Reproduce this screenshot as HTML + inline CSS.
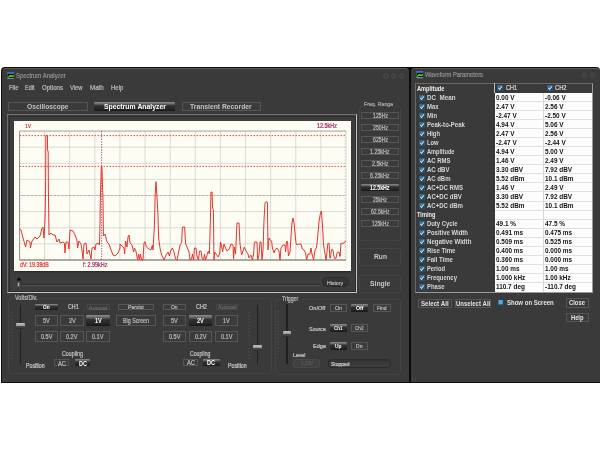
<!DOCTYPE html>
<html><head><meta charset="utf-8"><title>Spectrum Analyzer</title>
<style>
html,body{margin:0;padding:0;background:#fff;}
body{width:600px;height:450px;position:relative;overflow:hidden;font-family:"Liberation Sans",sans-serif;}
div,span,svg{position:absolute;box-sizing:border-box;}
.t{white-space:nowrap;transform-origin:0 50%;display:block;-webkit-text-stroke:0.22px currentColor;}
.t.bd{-webkit-text-stroke:0;font-weight:bold;}
.b{border:1px solid #565656;background:#3b3b3b;}
.b.on{border:0;background:linear-gradient(#8c8c8c 0%,#6e6e6e 18%,#303030 42%,#262626 80%,#161616 100%);border-radius:1px;}
.b.rd{border:1px solid #2c2c2c;border-radius:5px;background:linear-gradient(#383838,#2e2e2e);}
.b.ds{border-color:#474747;}
.p{border:1px solid #444;border-radius:3px;}
</style></head><body><div id="root" style="left:0;top:0;width:600px;height:450px;will-change:transform;filter:blur(0.35px);">

<div class="" style="left:1.00px;top:67.00px;width:599.00px;height:315.80px;background:#0c0c0c;border-radius:4px 4px 0 0;"></div>
<div class="" style="left:2.20px;top:67.60px;width:406.80px;height:314.10px;background:#3a3a3a;border-radius:4px 4px 0 0;border-top:1px solid #5a5a5a;"></div>
<div class="" style="left:411.00px;top:67.60px;width:189.00px;height:314.10px;background:#3a3a3a;border-radius:4px 4px 0 0;border-top:1px solid #5a5a5a;"></div>
<svg style="left:2.6px;top:376px" width="6" height="6" viewBox="0 0 6 6"><path d="M0.5 5.5h1M2.5 5.5h1M4.5 5.5h1M0.5 3.5h1M2.5 3.5h1M0.5 1.5h1" stroke="#4c4c4c" stroke-width="1"/></svg>
<svg style="left:411.6px;top:376px" width="6" height="6" viewBox="0 0 6 6"><path d="M0.5 5.5h1M2.5 5.5h1M4.5 5.5h1M0.5 3.5h1M2.5 3.5h1M0.5 1.5h1" stroke="#4c4c4c" stroke-width="1"/></svg>
<svg style="left:6.8px;top:71.5px" width="7.6" height="7.6" viewBox="0 0 15 15"><rect x="0" y="0.5" width="15" height="14" rx="1.5" fill="#5f6e8c"/><rect x="1" y="0.5" width="13.5" height="3.6" fill="#3f6fe0"/><rect x="1.2" y="3.6" width="13.3" height="8.6" fill="#081208"/><path d="M2 10.5C3.5 6.5 7 5 9.5 6.5C11 7.4 12.5 6.5 13.8 5V8.5C12 10.5 10 10.5 8.5 9.5C6.5 8.5 4.5 10 2.5 11.8Z" fill="#52d81e"/><rect x="1.2" y="12.2" width="13.3" height="2" fill="#8a8f98"/></svg>
<span class="t" style="left:16.00px;top:71.64px;font-size:6.60px;line-height:7.92px;color:#909090;transform:scaleX(0.894);">Spectrum&nbsp;Analyzer</span>
<div class="" style="left:383.40px;top:73.00px;width:5.60px;height:5.60px;border:1px solid #484848;border-radius:3px;background:#404040;"></div>
<div class="" style="left:390.90px;top:73.00px;width:5.60px;height:5.60px;border:1px solid #484848;border-radius:3px;background:#404040;"></div>
<div class="" style="left:398.50px;top:73.00px;width:5.60px;height:5.60px;border:1px solid #484848;border-radius:3px;background:#404040;"></div>
<span class="t" style="left:9.00px;top:84.24px;font-size:6.60px;line-height:7.92px;color:#bababa;transform:scaleX(0.893);">File</span>
<span class="t" style="left:25.00px;top:84.24px;font-size:6.60px;line-height:7.92px;color:#bababa;transform:scaleX(0.835);">Edit</span>
<span class="t" style="left:42.00px;top:84.24px;font-size:6.60px;line-height:7.92px;color:#bababa;transform:scaleX(0.923);">Options</span>
<span class="t" style="left:70.00px;top:84.24px;font-size:6.60px;line-height:7.92px;color:#bababa;transform:scaleX(0.881);">View</span>
<span class="t" style="left:90.00px;top:84.24px;font-size:6.60px;line-height:7.92px;color:#bababa;transform:scaleX(0.934);">Math</span>
<span class="t" style="left:110.70px;top:84.24px;font-size:6.60px;line-height:7.92px;color:#bababa;transform:scaleX(0.906);">Help</span>
<div class="b" style="left:8.40px;top:102.40px;width:79.60px;height:8.40px;"></div>
<span class="t bd" style="left:27.40px;top:102.49px;font-size:7.60px;line-height:9.12px;color:#c4c4c4;transform:scaleX(0.879);">Oscilloscope</span>
<div class="b on" style="left:94.30px;top:102.30px;width:80.70px;height:8.50px;"></div>
<span class="t bd" style="left:103.80px;top:102.44px;font-size:7.60px;line-height:9.12px;color:#fff;transform:scaleX(0.900);">Spectrum&nbsp;Analyzer</span>
<div class="b" style="left:181.70px;top:102.40px;width:79.00px;height:8.40px;"></div>
<span class="t bd" style="left:190.35px;top:102.49px;font-size:7.60px;line-height:9.12px;color:#c4c4c4;transform:scaleX(0.891);">Transient&nbsp;Recorder</span>
<div class="" style="left:7.20px;top:114.40px;width:350.30px;height:178.60px;border:1.4px solid #c4c4c4;border-top-color:#707070;border-left-color:#6e6e6e;background:#3d3d3d;"></div>
<div class="" style="left:8.60px;top:115.80px;width:347.50px;height:175.80px;border:1.6px solid #2c2c2c;border-right-width:1px;border-bottom-width:1px;"></div>
<div class="" style="left:13.60px;top:120.80px;width:337.50px;height:150.20px;background:#fdfdf3;box-shadow:0 1.5px 1.5px #2a2a2a;"></div>
<svg style="left:0;top:0" width="600" height="450" viewBox="0 0 600 450"><path d="M19.50 131.00V260.00M44.62 131.00V260.00M69.73 131.00V260.00M94.85 131.00V260.00M119.96 131.00V260.00M145.08 131.00V260.00M170.19 131.00V260.00M195.31 131.00V260.00M220.42 131.00V260.00M245.54 131.00V260.00M270.65 131.00V260.00M295.77 131.00V260.00M320.88 131.00V260.00M346.00 131.00V260.00M19.50 131.00H346.00M19.50 147.12H346.00M19.50 163.25H346.00M19.50 179.38H346.00M19.50 195.50H346.00M19.50 211.62H346.00M19.50 227.75H346.00M19.50 243.88H346.00M19.50 260.00H346.00" stroke="#d0d0c9" stroke-width="0.75" fill="none"/><path d="M19.50 131.00V260.00H346.00" stroke="#8e8e88" stroke-width="0.9" fill="none"/><path d="M19.50 131.00H346.00" stroke="#a8a8a2" stroke-width="0.8" fill="none"/><path d="M19.50 195.50H346.00" stroke="#adada7" stroke-width="0.9" stroke-dasharray="2.2 1.6" fill="none"/><path d="M19.50 131.00h1.6M19.50 134.22h1.6M19.50 137.45h1.6M19.50 140.68h1.6M19.50 143.90h1.6M19.50 147.12h1.6M19.50 150.35h1.6M19.50 153.57h1.6M19.50 156.80h1.6M19.50 160.03h1.6M19.50 163.25h1.6M19.50 166.47h1.6M19.50 169.70h1.6M19.50 172.93h1.6M19.50 176.15h1.6M19.50 179.38h1.6M19.50 182.60h1.6M19.50 185.82h1.6M19.50 189.05h1.6M19.50 192.28h1.6M19.50 195.50h1.6M19.50 198.72h1.6M19.50 201.95h1.6M19.50 205.18h1.6M19.50 208.40h1.6M19.50 211.62h1.6M19.50 214.85h1.6M19.50 218.07h1.6M19.50 221.30h1.6M19.50 224.53h1.6M19.50 227.75h1.6M19.50 230.97h1.6M19.50 234.20h1.6M19.50 237.43h1.6M19.50 240.65h1.6M19.50 243.88h1.6M19.50 247.10h1.6M19.50 250.32h1.6M19.50 253.55h1.6M19.50 256.77h1.6M19.50 260.00h1.6M346.00 131.00h-1.6M346.00 134.22h-1.6M346.00 137.45h-1.6M346.00 140.68h-1.6M346.00 143.90h-1.6M346.00 147.12h-1.6M346.00 150.35h-1.6M346.00 153.57h-1.6M346.00 156.80h-1.6M346.00 160.03h-1.6M346.00 163.25h-1.6M346.00 166.47h-1.6M346.00 169.70h-1.6M346.00 172.93h-1.6M346.00 176.15h-1.6M346.00 179.38h-1.6M346.00 182.60h-1.6M346.00 185.82h-1.6M346.00 189.05h-1.6M346.00 192.28h-1.6M346.00 195.50h-1.6M346.00 198.72h-1.6M346.00 201.95h-1.6M346.00 205.18h-1.6M346.00 208.40h-1.6M346.00 211.62h-1.6M346.00 214.85h-1.6M346.00 218.07h-1.6M346.00 221.30h-1.6M346.00 224.53h-1.6M346.00 227.75h-1.6M346.00 230.97h-1.6M346.00 234.20h-1.6M346.00 237.43h-1.6M346.00 240.65h-1.6M346.00 243.88h-1.6M346.00 247.10h-1.6M346.00 250.32h-1.6M346.00 253.55h-1.6M346.00 256.77h-1.6M346.00 260.00h-1.6M19.50 131.00v1.4M19.50 260.00v-1.4M24.52 131.00v1.4M24.52 260.00v-1.4M29.55 131.00v1.4M29.55 260.00v-1.4M34.57 131.00v1.4M34.57 260.00v-1.4M39.59 131.00v1.4M39.59 260.00v-1.4M44.62 131.00v1.4M44.62 260.00v-1.4M49.64 131.00v1.4M49.64 260.00v-1.4M54.66 131.00v1.4M54.66 260.00v-1.4M59.68 131.00v1.4M59.68 260.00v-1.4M64.71 131.00v1.4M64.71 260.00v-1.4M69.73 131.00v1.4M69.73 260.00v-1.4M74.75 131.00v1.4M74.75 260.00v-1.4M79.78 131.00v1.4M79.78 260.00v-1.4M84.80 131.00v1.4M84.80 260.00v-1.4M89.82 131.00v1.4M89.82 260.00v-1.4M94.85 131.00v1.4M94.85 260.00v-1.4M99.87 131.00v1.4M99.87 260.00v-1.4M104.89 131.00v1.4M104.89 260.00v-1.4M109.92 131.00v1.4M109.92 260.00v-1.4M114.94 131.00v1.4M114.94 260.00v-1.4M119.96 131.00v1.4M119.96 260.00v-1.4M124.98 131.00v1.4M124.98 260.00v-1.4M130.01 131.00v1.4M130.01 260.00v-1.4M135.03 131.00v1.4M135.03 260.00v-1.4M140.05 131.00v1.4M140.05 260.00v-1.4M145.08 131.00v1.4M145.08 260.00v-1.4M150.10 131.00v1.4M150.10 260.00v-1.4M155.12 131.00v1.4M155.12 260.00v-1.4M160.15 131.00v1.4M160.15 260.00v-1.4M165.17 131.00v1.4M165.17 260.00v-1.4M170.19 131.00v1.4M170.19 260.00v-1.4M175.22 131.00v1.4M175.22 260.00v-1.4M180.24 131.00v1.4M180.24 260.00v-1.4M185.26 131.00v1.4M185.26 260.00v-1.4M190.28 131.00v1.4M190.28 260.00v-1.4M195.31 131.00v1.4M195.31 260.00v-1.4M200.33 131.00v1.4M200.33 260.00v-1.4M205.35 131.00v1.4M205.35 260.00v-1.4M210.38 131.00v1.4M210.38 260.00v-1.4M215.40 131.00v1.4M215.40 260.00v-1.4M220.42 131.00v1.4M220.42 260.00v-1.4M225.45 131.00v1.4M225.45 260.00v-1.4M230.47 131.00v1.4M230.47 260.00v-1.4M235.49 131.00v1.4M235.49 260.00v-1.4M240.52 131.00v1.4M240.52 260.00v-1.4M245.54 131.00v1.4M245.54 260.00v-1.4M250.56 131.00v1.4M250.56 260.00v-1.4M255.58 131.00v1.4M255.58 260.00v-1.4M260.61 131.00v1.4M260.61 260.00v-1.4M265.63 131.00v1.4M265.63 260.00v-1.4M270.65 131.00v1.4M270.65 260.00v-1.4M275.68 131.00v1.4M275.68 260.00v-1.4M280.70 131.00v1.4M280.70 260.00v-1.4M285.72 131.00v1.4M285.72 260.00v-1.4M290.75 131.00v1.4M290.75 260.00v-1.4M295.77 131.00v1.4M295.77 260.00v-1.4M300.79 131.00v1.4M300.79 260.00v-1.4M305.82 131.00v1.4M305.82 260.00v-1.4M310.84 131.00v1.4M310.84 260.00v-1.4M315.86 131.00v1.4M315.86 260.00v-1.4M320.88 131.00v1.4M320.88 260.00v-1.4M325.91 131.00v1.4M325.91 260.00v-1.4M330.93 131.00v1.4M330.93 260.00v-1.4M335.95 131.00v1.4M335.95 260.00v-1.4M340.98 131.00v1.4M340.98 260.00v-1.4M346.00 131.00v1.4M346.00 260.00v-1.4" stroke="#b0b0aa" stroke-width="0.5" fill="none"/><path d="M19.50 260.00H346.00" stroke="#8e8e88" stroke-width="0.9" fill="none"/><path d="M19.50 135.6H346.00M19.50 166.4H346.00" stroke="#e83a3a" stroke-width="0.9" stroke-dasharray="1.6 1.4" fill="none"/><path d="M101.6 131.00V260.00" stroke="#a03068" stroke-width="0.9" stroke-dasharray="1.2 1.4" fill="none"/><path d="M19.5 229.0 L21.0 230.0 L23.0 238.0 L25.6 247.0 L27.0 240.0 L30.0 242.0 L30.4 248.0 L32.0 241.0 L35.0 237.0 L37.0 239.0 L40.0 236.0 L42.0 228.0 L43.0 227.0 L44.0 238.0 L45.0 220.0 L45.6 190.0 L45.9 135.6 L47.4 135.6 L47.6 150.0 L48.2 152.0 L48.4 190.0 L49.0 235.0 L51.0 233.0 L53.0 235.0 L55.0 235.0 L57.0 242.0 L59.0 239.0 L60.0 243.0 L63.0 242.0 L64.4 243.0 L65.0 253.0 L66.0 242.0 L68.0 242.0 L69.0 249.0 L70.0 230.0 L73.0 231.0 L75.0 235.0 L77.0 240.0 L77.6 248.0 L79.0 241.0 L81.0 244.0 L82.0 250.0 L83.0 259.0 L84.0 244.0 L86.0 243.0 L87.0 254.0 L89.0 250.0 L91.0 259.0 L92.0 248.0 L94.0 247.0 L95.0 250.0 L96.0 244.0 L98.0 243.0 L99.4 245.0 L99.9 230.0 L100.3 200.0 L101.3 166.6 L101.9 166.6 L103.0 200.0 L103.4 236.0 L105.0 234.0 L107.0 242.0 L109.0 244.0 L111.0 250.0 L113.0 255.0 L115.0 256.0 L118.0 253.0 L120.0 248.0 L120.0 244.0 L122.0 246.0 L124.0 248.0 L124.6 254.0 L125.6 241.0 L127.0 247.0 L128.0 237.0 L129.0 235.0 L130.0 243.0 L132.0 245.0 L133.6 252.0 L134.4 248.0 L135.6 250.0 L136.6 254.0 L137.6 260.0 L138.6 254.0 L139.6 260.0 L140.4 254.0 L141.6 260.0 L143.0 260.0 L144.0 243.0 L145.0 241.6 L146.4 247.0 L149.0 249.0 L151.0 250.0 L152.4 245.0 L153.0 250.0 L154.4 226.0 L155.2 195.0 L156.0 181.6 L156.9 195.0 L158.0 216.0 L158.6 238.0 L160.0 248.0 L161.6 255.0 L164.0 260.0 L166.0 255.0 L168.0 252.0 L169.4 256.0 L170.6 251.0 L172.4 248.0 L174.0 252.0 L175.6 259.0 L177.0 260.0 L179.0 250.0 L180.4 244.0 L181.6 243.0 L182.4 227.0 L184.6 227.0 L185.6 244.0 L187.0 247.0 L189.0 252.0 L190.0 260.0 L191.6 259.0 L192.4 254.0 L193.6 260.0 L194.4 248.0 L196.0 248.0 L197.0 256.0 L198.4 260.0 L199.6 251.0 L201.0 251.0 L202.0 258.0 L203.6 260.0 L204.4 254.0 L205.6 260.0 L207.0 255.0 L208.4 251.0 L209.4 254.0 L210.4 220.0 L211.0 192.0 L212.0 192.0 L212.6 208.0 L213.4 210.0 L214.0 260.0 L214.6 252.0 L216.0 254.0 L218.0 257.0 L219.6 254.0 L220.6 242.0 L221.6 246.0 L222.6 252.0 L224.0 244.0 L225.6 248.0 L227.0 251.0 L228.4 250.0 L229.6 248.0 L231.0 244.0 L233.0 245.0 L233.6 259.0 L234.4 247.0 L235.6 254.0 L237.0 223.0 L239.0 223.0 L240.0 244.0 L241.6 255.0 L243.0 251.0 L244.4 247.0 L246.0 251.0 L248.0 254.0 L249.0 258.0 L251.0 255.0 L252.4 260.0 L253.6 254.0 L254.4 242.0 L257.0 242.0 L257.6 260.0 L259.0 255.0 L260.0 242.0 L261.0 242.0 L262.0 260.0 L263.0 250.0 L264.0 220.0 L265.0 203.0 L266.0 201.6 L267.4 202.4 L268.0 250.0 L269.0 238.0 L270.0 240.0 L271.6 241.0 L272.4 248.0 L274.0 253.0 L275.6 249.0 L277.0 248.0 L279.0 251.0 L280.0 260.0 L281.0 248.0 L283.0 245.0 L285.0 245.0 L285.6 252.0 L286.6 241.0 L287.6 242.0 L288.4 256.0 L290.0 252.0 L291.0 236.0 L292.0 223.0 L293.0 218.0 L294.0 223.0 L295.0 233.0 L296.0 243.0 L297.0 245.0 L299.0 244.0 L301.0 244.0 L302.4 249.0 L304.0 250.0 L305.6 253.0 L306.6 260.0 L308.0 254.0 L310.0 254.0 L311.0 248.0 L312.0 254.0 L313.6 260.0 L315.0 250.0 L316.4 248.0 L317.6 238.0 L319.0 222.0 L320.4 213.0 L321.4 211.0 L322.4 224.0 L323.6 245.0 L325.0 254.0 L326.1 260.0 L327.2 250.0 L327.8 243.5 L329.1 243.5 L329.8 258.0 L330.6 258.0 L331.3 250.0 L332.8 249.5 L333.9 256.0 L334.7 258.5 L336.1 258.0 L337.2 252.5 L339.1 252.0 L339.8 256.5 L340.2 256.0 L340.9 243.5 L343.9 243.0 L345.0 241.5 L346.0 241.5" stroke="#e5352f" stroke-width="1" fill="none" stroke-linejoin="round"/></svg>
<span class="t bd" style="left:24.90px;top:122.50px;font-size:6.00px;line-height:7.20px;color:#e03030;transform:scaleX(0.818);">1V</span>
<span class="t" style="left:317.00px;top:122.16px;font-size:6.40px;line-height:7.68px;color:#a02868;transform:scaleX(0.852);">12.5kHz</span>
<span class="t" style="left:20.20px;top:261.36px;font-size:6.40px;line-height:7.68px;color:#e03030;transform:scaleX(0.823);">dV:&nbsp;19.38dB</span>
<span class="t" style="left:82.60px;top:261.36px;font-size:6.40px;line-height:7.68px;color:#a02868;transform:scaleX(0.847);">f:&nbsp;2.99kHz</span>
<div class="" style="left:22.00px;top:284.00px;width:298.20px;height:1.60px;background:linear-gradient(#2a2a2a 50%,#545454 50%);"></div>
<div class="" style="left:16.60px;top:282.00px;width:3.40px;height:5.00px;background:#b8b8b8;border-radius:1px;border:0.5px solid #555;"></div>
<svg style="left:15.5px;top:277px" width="6" height="4" viewBox="0 0 6 4"><path d="M3 0L5.6 3.6H0.4Z" fill="#0a0a0a"/></svg>
<div class="b rd" style="left:321.80px;top:277.20px;width:27.00px;height:9.80px;"></div>
<span class="t" style="left:327.30px;top:278.83px;font-size:6.20px;line-height:7.44px;color:#bcbcbc;transform:scaleX(0.829);">History</span>
<div class="p" style="left:359.40px;top:106.00px;width:41.60px;height:135.40px;"></div>
<div class="" style="left:362.00px;top:101.00px;width:32.00px;height:7.00px;background:#3a3a3a;"></div>
<span class="t" style="left:364.00px;top:99.64px;font-size:6.10px;line-height:7.32px;color:#ababab;transform:scaleX(0.861);">Freq.&nbsp;Range</span>
<div class="b" style="left:361.40px;top:112.20px;width:37.60px;height:6.70px;"></div>
<span class="t" style="left:372.70px;top:112.16px;font-size:6.40px;line-height:7.68px;color:#bcbcbc;transform:scaleX(0.811);">125Hz</span>
<div class="b" style="left:361.40px;top:124.23px;width:37.60px;height:6.70px;"></div>
<span class="t" style="left:372.70px;top:124.19px;font-size:6.40px;line-height:7.68px;color:#bcbcbc;transform:scaleX(0.811);">250Hz</span>
<div class="b" style="left:361.40px;top:136.26px;width:37.60px;height:6.70px;"></div>
<span class="t" style="left:372.70px;top:136.22px;font-size:6.40px;line-height:7.68px;color:#bcbcbc;transform:scaleX(0.811);">625Hz</span>
<div class="b" style="left:361.40px;top:148.29px;width:37.60px;height:6.70px;"></div>
<span class="t" style="left:370.45px;top:148.25px;font-size:6.40px;line-height:7.68px;color:#bcbcbc;transform:scaleX(0.831);">1.25kHz</span>
<div class="b" style="left:361.40px;top:160.32px;width:37.60px;height:6.70px;"></div>
<span class="t" style="left:371.95px;top:160.28px;font-size:6.40px;line-height:7.68px;color:#bcbcbc;transform:scaleX(0.828);">2.5kHz</span>
<div class="b" style="left:361.40px;top:172.35px;width:37.60px;height:6.70px;"></div>
<span class="t" style="left:370.45px;top:172.31px;font-size:6.40px;line-height:7.68px;color:#bcbcbc;transform:scaleX(0.831);">6.25kHz</span>
<div class="b on" style="left:361.40px;top:184.38px;width:37.60px;height:6.70px;"></div>
<span class="t bd" style="left:370.45px;top:184.34px;font-size:6.40px;line-height:7.68px;color:#fff;transform:scaleX(0.818);">12.5kHz</span>
<div class="b" style="left:361.40px;top:196.41px;width:37.60px;height:6.70px;"></div>
<span class="t" style="left:373.20px;top:196.37px;font-size:6.40px;line-height:7.68px;color:#bcbcbc;transform:scaleX(0.772);">25kHz</span>
<div class="b" style="left:361.40px;top:208.44px;width:37.60px;height:6.70px;"></div>
<span class="t" style="left:370.95px;top:208.40px;font-size:6.40px;line-height:7.68px;color:#bcbcbc;transform:scaleX(0.788);">62.5kHz</span>
<div class="b" style="left:361.40px;top:220.47px;width:37.60px;height:6.70px;"></div>
<span class="t" style="left:371.70px;top:220.43px;font-size:6.40px;line-height:7.68px;color:#bcbcbc;transform:scaleX(0.783);">125kHz</span>
<div class="p" style="left:359.40px;top:248.40px;width:41.60px;height:17.80px;"></div>
<span class="t bd" style="left:373.80px;top:252.32px;font-size:7.80px;line-height:9.36px;color:#c8c8c8;transform:scaleX(0.857);">Run</span>
<div class="p" style="left:359.40px;top:275.00px;width:41.60px;height:17.60px;"></div>
<span class="t bd" style="left:369.90px;top:278.92px;font-size:7.80px;line-height:9.36px;color:#c8c8c8;transform:scaleX(0.872);">Single</span>
<div class="p" style="left:7.60px;top:298.40px;width:264.60px;height:76.00px;"></div>
<div class="" style="left:13.50px;top:295.00px;width:24.50px;height:7.00px;background:#3a3a3a;"></div>
<span class="t" style="left:14.50px;top:294.30px;font-size:6.50px;line-height:7.80px;color:#bdbdbd;transform:scaleX(0.842);">Volts/Div.</span>
<div class="" style="left:19.90px;top:305.00px;width:1.60px;height:59.40px;background:#202020;"></div>
<svg style="left:11.00px;top:311.50px" width="3" height="47.40"><path d="M0 0.50h2.2M0 3.81h2.2M0 7.13h2.2M0 10.44h2.2M0 13.76h2.2M0 17.07h2.2M0 20.39h2.2M0 23.70h2.2M0 27.01h2.2M0 30.33h2.2M0 33.64h2.2M0 36.96h2.2M0 40.27h2.2M0 43.59h2.2M0 46.90h2.2" stroke="#4b4b4b" stroke-width="0.9"/></svg>
<div class="" style="left:16.20px;top:322.70px;width:8.80px;height:6.00px;background:linear-gradient(#c4c4c4 0%,#a0a0a0 40%,#4a4a4a 58%,#2a2a2a 100%);border-radius:1.2px;"></div>
<div class="" style="left:256.90px;top:305.00px;width:1.60px;height:59.00px;background:#202020;"></div>
<svg style="left:248.00px;top:311.50px" width="3" height="47.00"><path d="M0 0.50h2.2M0 3.79h2.2M0 7.07h2.2M0 10.36h2.2M0 13.64h2.2M0 16.93h2.2M0 20.21h2.2M0 23.50h2.2M0 26.79h2.2M0 30.07h2.2M0 33.36h2.2M0 36.64h2.2M0 39.93h2.2M0 43.21h2.2M0 46.50h2.2" stroke="#4b4b4b" stroke-width="0.9"/></svg>
<div class="" style="left:253.20px;top:345.40px;width:8.80px;height:5.80px;background:linear-gradient(#c4c4c4 0%,#a0a0a0 40%,#4a4a4a 58%,#2a2a2a 100%);border-radius:1.2px;"></div>
<div class="b on" style="left:34.50px;top:303.60px;width:23.50px;height:6.80px;"></div>
<span class="t bd" style="left:42.95px;top:303.85px;font-size:6.00px;line-height:7.20px;color:#fff;transform:scaleX(0.792);">On</span>
<span class="t" style="left:67.60px;top:303.06px;font-size:6.40px;line-height:7.68px;color:#c8c8c8;transform:scaleX(0.828);">CH1</span>
<div class="b ds" style="left:87.00px;top:303.60px;width:22.80px;height:6.60px;"></div>
<span class="t" style="left:89.15px;top:303.63px;font-size:6.20px;line-height:7.44px;color:#6a6a6a;transform:scaleX(0.880);">Autoset</span>
<div class="b" style="left:117.80px;top:303.60px;width:36.00px;height:6.20px;"></div>
<span class="t" style="left:127.90px;top:303.43px;font-size:6.20px;line-height:7.44px;color:#bcbcbc;transform:scaleX(0.834);">Persist</span>
<div class="b" style="left:116.00px;top:315.20px;width:39.80px;height:10.40px;"></div>
<span class="t" style="left:122.90px;top:316.95px;font-size:6.50px;line-height:7.80px;color:#bcbcbc;transform:scaleX(0.818);">Big&nbsp;Screen</span>
<div class="b" style="left:34.50px;top:315.20px;width:23.40px;height:10.40px;"></div>
<span class="t" style="left:42.80px;top:316.89px;font-size:6.60px;line-height:7.92px;color:#bcbcbc;transform:scaleX(0.842);">5V</span>
<div class="b" style="left:60.40px;top:315.20px;width:23.40px;height:10.40px;"></div>
<span class="t" style="left:68.70px;top:316.89px;font-size:6.60px;line-height:7.92px;color:#bcbcbc;transform:scaleX(0.842);">2V</span>
<div class="b on" style="left:86.30px;top:315.20px;width:23.40px;height:10.40px;"></div>
<span class="t bd" style="left:94.60px;top:316.89px;font-size:6.60px;line-height:7.92px;color:#fff;transform:scaleX(0.842);">1V</span>
<div class="b" style="left:34.50px;top:331.40px;width:23.40px;height:10.40px;"></div>
<span class="t" style="left:40.50px;top:333.09px;font-size:6.60px;line-height:7.92px;color:#bcbcbc;transform:scaleX(0.840);">0.5V</span>
<div class="b" style="left:60.40px;top:331.40px;width:23.40px;height:10.40px;"></div>
<span class="t" style="left:66.40px;top:333.09px;font-size:6.60px;line-height:7.92px;color:#bcbcbc;transform:scaleX(0.840);">0.2V</span>
<div class="b" style="left:86.30px;top:331.40px;width:23.40px;height:10.40px;"></div>
<span class="t" style="left:92.30px;top:333.09px;font-size:6.60px;line-height:7.92px;color:#bcbcbc;transform:scaleX(0.840);">0.1V</span>
<span class="t" style="left:61.80px;top:349.94px;font-size:6.60px;line-height:7.92px;color:#c0c0c0;transform:scaleX(0.806);">Coupling</span>
<span class="t" style="left:25.70px;top:361.96px;font-size:6.40px;line-height:7.68px;color:#c8c8c8;transform:scaleX(0.817);">Position</span>
<div class="b" style="left:54.10px;top:359.30px;width:15.40px;height:7.20px;"></div>
<span class="t" style="left:57.80px;top:359.51px;font-size:6.40px;line-height:7.68px;color:#bcbcbc;transform:scaleX(0.900);">AC</span>
<div class="b on" style="left:74.70px;top:359.30px;width:15.80px;height:7.20px;"></div>
<span class="t bd" style="left:78.60px;top:359.51px;font-size:6.40px;line-height:7.68px;color:#fff;transform:scaleX(0.865);">DC</span>
<div class="b" style="left:163.00px;top:303.60px;width:22.80px;height:6.20px;"></div>
<span class="t" style="left:171.10px;top:303.67px;font-size:5.80px;line-height:6.96px;color:#bcbcbc;transform:scaleX(0.853);">On</span>
<span class="t" style="left:196.20px;top:303.06px;font-size:6.40px;line-height:7.68px;color:#c8c8c8;transform:scaleX(0.844);">CH2</span>
<div class="b ds" style="left:216.20px;top:303.60px;width:21.80px;height:6.20px;"></div>
<span class="t" style="left:217.85px;top:303.43px;font-size:6.20px;line-height:7.44px;color:#6a6a6a;transform:scaleX(0.880);">Autoset</span>
<div class="b" style="left:163.00px;top:315.20px;width:22.80px;height:10.40px;"></div>
<span class="t" style="left:171.00px;top:316.89px;font-size:6.60px;line-height:7.92px;color:#bcbcbc;transform:scaleX(0.842);">5V</span>
<div class="b on" style="left:189.10px;top:315.20px;width:22.80px;height:10.40px;"></div>
<span class="t bd" style="left:197.10px;top:316.89px;font-size:6.60px;line-height:7.92px;color:#fff;transform:scaleX(0.842);">2V</span>
<div class="b" style="left:215.20px;top:315.20px;width:22.80px;height:10.40px;"></div>
<span class="t" style="left:223.20px;top:316.89px;font-size:6.60px;line-height:7.92px;color:#bcbcbc;transform:scaleX(0.842);">1V</span>
<div class="b" style="left:163.00px;top:331.40px;width:22.80px;height:10.40px;"></div>
<span class="t" style="left:168.70px;top:333.09px;font-size:6.60px;line-height:7.92px;color:#bcbcbc;transform:scaleX(0.840);">0.5V</span>
<div class="b" style="left:189.10px;top:331.40px;width:22.80px;height:10.40px;"></div>
<span class="t" style="left:194.80px;top:333.09px;font-size:6.60px;line-height:7.92px;color:#bcbcbc;transform:scaleX(0.840);">0.2V</span>
<div class="b" style="left:215.20px;top:331.40px;width:22.80px;height:10.40px;"></div>
<span class="t" style="left:220.90px;top:333.09px;font-size:6.60px;line-height:7.92px;color:#bcbcbc;transform:scaleX(0.840);">0.1V</span>
<span class="t" style="left:190.40px;top:349.94px;font-size:6.60px;line-height:7.92px;color:#c0c0c0;transform:scaleX(0.783);">Coupling</span>
<div class="b" style="left:183.00px;top:359.30px;width:15.00px;height:7.00px;"></div>
<span class="t" style="left:186.50px;top:359.41px;font-size:6.40px;line-height:7.68px;color:#bcbcbc;transform:scaleX(0.900);">AC</span>
<div class="b on" style="left:202.50px;top:359.30px;width:17.00px;height:7.00px;"></div>
<span class="t bd" style="left:207.00px;top:359.41px;font-size:6.40px;line-height:7.68px;color:#fff;transform:scaleX(0.865);">DC</span>
<span class="t" style="left:227.50px;top:361.96px;font-size:6.40px;line-height:7.68px;color:#c8c8c8;transform:scaleX(0.821);">Position</span>
<div class="p" style="left:275.00px;top:298.60px;width:125.60px;height:76.80px;"></div>
<div class="" style="left:280.50px;top:295.00px;width:19.00px;height:7.00px;background:#3a3a3a;"></div>
<span class="t" style="left:281.80px;top:294.50px;font-size:6.50px;line-height:7.80px;color:#bdbdbd;transform:scaleX(0.796);">Trigger</span>
<div class="" style="left:286.20px;top:304.40px;width:1.60px;height:59.40px;background:#202020;"></div>
<svg style="left:277.30px;top:310.90px" width="3" height="47.40"><path d="M0 0.50h2.2M0 3.81h2.2M0 7.13h2.2M0 10.44h2.2M0 13.76h2.2M0 17.07h2.2M0 20.39h2.2M0 23.70h2.2M0 27.01h2.2M0 30.33h2.2M0 33.64h2.2M0 36.96h2.2M0 40.27h2.2M0 43.59h2.2M0 46.90h2.2" stroke="#4b4b4b" stroke-width="0.9"/></svg>
<div class="" style="left:282.50px;top:331.00px;width:8.80px;height:6.00px;background:linear-gradient(#c4c4c4 0%,#a0a0a0 40%,#4a4a4a 58%,#2a2a2a 100%);border-radius:1.2px;"></div>
<span class="t" style="left:308.60px;top:304.08px;font-size:6.20px;line-height:7.44px;color:#c8c8c8;transform:scaleX(0.904);">On/Off</span>
<div class="b" style="left:329.50px;top:304.00px;width:17.10px;height:7.80px;"></div>
<span class="t" style="left:334.55px;top:304.75px;font-size:6.00px;line-height:7.20px;color:#bcbcbc;transform:scaleX(0.875);">On</span>
<div class="b on" style="left:351.20px;top:304.00px;width:17.00px;height:7.80px;"></div>
<span class="t bd" style="left:355.95px;top:304.75px;font-size:6.00px;line-height:7.20px;color:#fff;transform:scaleX(0.866);">Off</span>
<div class="b" style="left:373.10px;top:304.00px;width:17.80px;height:7.80px;"></div>
<span class="t" style="left:377.25px;top:304.75px;font-size:6.00px;line-height:7.20px;color:#bcbcbc;transform:scaleX(0.814);">Find</span>
<span class="t" style="left:308.60px;top:324.68px;font-size:6.20px;line-height:7.44px;color:#c8c8c8;transform:scaleX(0.865);">Source</span>
<div class="b on" style="left:329.50px;top:324.20px;width:17.10px;height:8.20px;"></div>
<span class="t bd" style="left:333.80px;top:325.15px;font-size:6.00px;line-height:7.20px;color:#fff;transform:scaleX(0.750);">Ch1</span>
<div class="b" style="left:351.20px;top:324.20px;width:17.00px;height:8.20px;"></div>
<span class="t" style="left:355.45px;top:325.15px;font-size:6.00px;line-height:7.20px;color:#bcbcbc;transform:scaleX(0.772);">Ch2</span>
<span class="t" style="left:312.60px;top:342.28px;font-size:6.20px;line-height:7.44px;color:#c8c8c8;transform:scaleX(0.898);">Edge</span>
<div class="b on" style="left:329.50px;top:342.20px;width:17.10px;height:8.20px;"></div>
<span class="t bd" style="left:334.80px;top:343.15px;font-size:6.00px;line-height:7.20px;color:#fff;transform:scaleX(0.813);">Up</span>
<div class="b" style="left:351.20px;top:342.20px;width:17.00px;height:8.20px;"></div>
<span class="t" style="left:356.45px;top:343.15px;font-size:6.00px;line-height:7.20px;color:#bcbcbc;transform:scaleX(0.847);">Dn</span>
<span class="t" style="left:292.60px;top:350.78px;font-size:6.20px;line-height:7.44px;color:#c8c8c8;transform:scaleX(0.837);">Level</span>
<div class="" style="left:293.30px;top:359.20px;width:26.90px;height:9.20px;border:1px solid #4a4a4a;border-radius:3px;background:#404040;"></div>
<span class="t" style="left:300.80px;top:360.40px;font-size:6.00px;line-height:7.20px;color:#5e5e5e;transform:scaleX(0.765);">1.13V</span>
<div class="" style="left:328.30px;top:359.20px;width:63.00px;height:9.20px;border:1px solid #2c2c2c;border-radius:3px;background:linear-gradient(#343434,#3e3e3e);"></div>
<span class="t" style="left:331.00px;top:360.28px;font-size:6.20px;line-height:7.44px;color:#d0d0d0;transform:scaleX(0.801);">Stopped</span>
<svg style="left:415.6px;top:71.4px" width="7.6" height="7.6" viewBox="0 0 15 15"><rect x="0" y="0.5" width="15" height="14" rx="1.5" fill="#5f6e8c"/><rect x="1" y="0.5" width="13.5" height="3.6" fill="#3f6fe0"/><rect x="1.2" y="3.6" width="13.3" height="8.6" fill="#081208"/><path d="M2 10.5C3.5 6.5 7 5 9.5 6.5C11 7.4 12.5 6.5 13.8 5V8.5C12 10.5 10 10.5 8.5 9.5C6.5 8.5 4.5 10 2.5 11.8Z" fill="#52d81e"/><rect x="1.2" y="12.2" width="13.3" height="2" fill="#8a8f98"/></svg>
<span class="t" style="left:425.20px;top:71.44px;font-size:6.60px;line-height:7.92px;color:#909090;transform:scaleX(0.883);">Waveform&nbsp;Parameters</span>
<div class="" style="left:581.60px;top:72.40px;width:5.60px;height:5.60px;border:1px solid #484848;border-radius:3px;background:#404040;"></div>
<div class="" style="left:589.60px;top:72.40px;width:5.60px;height:5.60px;border:1px solid #484848;border-radius:3px;background:#404040;"></div>
<div class="" style="left:414.50px;top:82.60px;width:178.10px;height:210.15px;border:1px solid #9a9a9a;border-top-color:#6a6a6a;border-left-color:#6a6a6a;background:#3a3a3a;"></div>
<div class="" style="left:495.20px;top:92.60px;width:96.60px;height:198.95px;background:#fdfdfd;"></div>
<div class="" style="left:494.40px;top:83.40px;width:0.80px;height:9.20px;background:#bdbdbd;"></div>
<div class="" style="left:543.20px;top:92.60px;width:0.80px;height:198.95px;background:#d4d4d4;"></div>
<div class="" style="left:495.20px;top:101.22px;width:96.60px;height:0.75px;background:#e0e0e0;"></div>
<div class="" style="left:495.20px;top:110.25px;width:96.60px;height:0.75px;background:#e0e0e0;"></div>
<div class="" style="left:495.20px;top:119.27px;width:96.60px;height:0.75px;background:#e0e0e0;"></div>
<div class="" style="left:495.20px;top:128.30px;width:96.60px;height:0.75px;background:#e0e0e0;"></div>
<div class="" style="left:495.20px;top:137.32px;width:96.60px;height:0.75px;background:#e0e0e0;"></div>
<div class="" style="left:495.20px;top:146.35px;width:96.60px;height:0.75px;background:#e0e0e0;"></div>
<div class="" style="left:495.20px;top:155.38px;width:96.60px;height:0.75px;background:#e0e0e0;"></div>
<div class="" style="left:495.20px;top:164.40px;width:96.60px;height:0.75px;background:#e0e0e0;"></div>
<div class="" style="left:495.20px;top:173.42px;width:96.60px;height:0.75px;background:#e0e0e0;"></div>
<div class="" style="left:495.20px;top:182.45px;width:96.60px;height:0.75px;background:#e0e0e0;"></div>
<div class="" style="left:495.20px;top:191.47px;width:96.60px;height:0.75px;background:#e0e0e0;"></div>
<div class="" style="left:495.20px;top:200.50px;width:96.60px;height:0.75px;background:#e0e0e0;"></div>
<div class="" style="left:495.20px;top:209.53px;width:96.60px;height:0.75px;background:#e0e0e0;"></div>
<div class="" style="left:495.20px;top:218.55px;width:96.60px;height:0.75px;background:#e0e0e0;"></div>
<div class="" style="left:495.20px;top:227.57px;width:96.60px;height:0.75px;background:#e0e0e0;"></div>
<div class="" style="left:495.20px;top:236.60px;width:96.60px;height:0.75px;background:#e0e0e0;"></div>
<div class="" style="left:495.20px;top:245.62px;width:96.60px;height:0.75px;background:#e0e0e0;"></div>
<div class="" style="left:495.20px;top:254.65px;width:96.60px;height:0.75px;background:#e0e0e0;"></div>
<div class="" style="left:495.20px;top:263.68px;width:96.60px;height:0.75px;background:#e0e0e0;"></div>
<div class="" style="left:495.20px;top:272.70px;width:96.60px;height:0.75px;background:#e0e0e0;"></div>
<div class="" style="left:495.20px;top:281.73px;width:96.60px;height:0.75px;background:#e0e0e0;"></div>
<span class="t bd" style="left:417.20px;top:84.64px;font-size:6.60px;line-height:7.92px;color:#f0f0f0;transform:scaleX(0.849);">Amplitude</span>
<svg style="left:497.00px;top:84.50px" width="6" height="6" viewBox="0 0 10 10"><rect x="0.3" y="0.3" width="9.4" height="9.4" rx="1.5" fill="#174a6c" stroke="#4d6a7c" stroke-width="0.8"/><path d="M1 1H9V3.6L1 5.6Z" fill="#3f93c4" opacity="0.7"/><path d="M2.2 5L4.3 7.4L8 2.4" stroke="#dcecf8" stroke-width="1.7" fill="none"/></svg>
<span class="t" style="left:506.00px;top:83.74px;font-size:6.60px;line-height:7.92px;color:#d8d8d8;transform:scaleX(0.833);">CH1</span>
<svg style="left:546.60px;top:84.50px" width="6" height="6" viewBox="0 0 10 10"><rect x="0.3" y="0.3" width="9.4" height="9.4" rx="1.5" fill="#174a6c" stroke="#4d6a7c" stroke-width="0.8"/><path d="M1 1H9V3.6L1 5.6Z" fill="#3f93c4" opacity="0.7"/><path d="M2.2 5L4.3 7.4L8 2.4" stroke="#dcecf8" stroke-width="1.7" fill="none"/></svg>
<span class="t" style="left:555.00px;top:83.74px;font-size:6.60px;line-height:7.92px;color:#d8d8d8;transform:scaleX(0.879);">CH2</span>
<svg style="left:418.50px;top:94.56px" width="6" height="6" viewBox="0 0 10 10"><rect x="0.3" y="0.3" width="9.4" height="9.4" rx="1.5" fill="#174a6c" stroke="#4d6a7c" stroke-width="0.8"/><path d="M1 1H9V3.6L1 5.6Z" fill="#3f93c4" opacity="0.7"/><path d="M2.2 5L4.3 7.4L8 2.4" stroke="#dcecf8" stroke-width="1.7" fill="none"/></svg>
<span class="t bd" style="left:427.00px;top:93.64px;font-size:6.70px;line-height:8.04px;color:#d6d6d6;transform:scaleX(0.934);">DC&nbsp;&nbsp;Mean</span>
<span class="t bd" style="left:496.40px;top:93.52px;font-size:6.90px;line-height:8.28px;color:#111;transform:scaleX(0.930);">0.00&nbsp;V</span>
<span class="t bd" style="left:545.00px;top:93.52px;font-size:6.90px;line-height:8.28px;color:#111;transform:scaleX(0.930);">-0.06&nbsp;V</span>
<svg style="left:418.50px;top:103.59px" width="6" height="6" viewBox="0 0 10 10"><rect x="0.3" y="0.3" width="9.4" height="9.4" rx="1.5" fill="#174a6c" stroke="#4d6a7c" stroke-width="0.8"/><path d="M1 1H9V3.6L1 5.6Z" fill="#3f93c4" opacity="0.7"/><path d="M2.2 5L4.3 7.4L8 2.4" stroke="#dcecf8" stroke-width="1.7" fill="none"/></svg>
<span class="t bd" style="left:427.00px;top:102.67px;font-size:6.70px;line-height:8.04px;color:#d6d6d6;transform:scaleX(0.882);">Max</span>
<span class="t bd" style="left:496.40px;top:102.55px;font-size:6.90px;line-height:8.28px;color:#111;transform:scaleX(0.930);">2.47&nbsp;V</span>
<span class="t bd" style="left:545.00px;top:102.55px;font-size:6.90px;line-height:8.28px;color:#111;transform:scaleX(0.930);">2.56&nbsp;V</span>
<svg style="left:418.50px;top:112.61px" width="6" height="6" viewBox="0 0 10 10"><rect x="0.3" y="0.3" width="9.4" height="9.4" rx="1.5" fill="#174a6c" stroke="#4d6a7c" stroke-width="0.8"/><path d="M1 1H9V3.6L1 5.6Z" fill="#3f93c4" opacity="0.7"/><path d="M2.2 5L4.3 7.4L8 2.4" stroke="#dcecf8" stroke-width="1.7" fill="none"/></svg>
<span class="t bd" style="left:427.00px;top:111.69px;font-size:6.70px;line-height:8.04px;color:#d6d6d6;transform:scaleX(0.867);">Min</span>
<span class="t bd" style="left:496.40px;top:111.57px;font-size:6.90px;line-height:8.28px;color:#111;transform:scaleX(0.930);">-2.47&nbsp;V</span>
<span class="t bd" style="left:545.00px;top:111.57px;font-size:6.90px;line-height:8.28px;color:#111;transform:scaleX(0.930);">-2.50&nbsp;V</span>
<svg style="left:418.50px;top:121.64px" width="6" height="6" viewBox="0 0 10 10"><rect x="0.3" y="0.3" width="9.4" height="9.4" rx="1.5" fill="#174a6c" stroke="#4d6a7c" stroke-width="0.8"/><path d="M1 1H9V3.6L1 5.6Z" fill="#3f93c4" opacity="0.7"/><path d="M2.2 5L4.3 7.4L8 2.4" stroke="#dcecf8" stroke-width="1.7" fill="none"/></svg>
<span class="t bd" style="left:427.00px;top:120.72px;font-size:6.70px;line-height:8.04px;color:#d6d6d6;transform:scaleX(0.903);">Peak-to-Peak</span>
<span class="t bd" style="left:496.40px;top:120.60px;font-size:6.90px;line-height:8.28px;color:#111;transform:scaleX(0.930);">4.94&nbsp;V</span>
<span class="t bd" style="left:545.00px;top:120.60px;font-size:6.90px;line-height:8.28px;color:#111;transform:scaleX(0.930);">5.06&nbsp;V</span>
<svg style="left:418.50px;top:130.66px" width="6" height="6" viewBox="0 0 10 10"><rect x="0.3" y="0.3" width="9.4" height="9.4" rx="1.5" fill="#174a6c" stroke="#4d6a7c" stroke-width="0.8"/><path d="M1 1H9V3.6L1 5.6Z" fill="#3f93c4" opacity="0.7"/><path d="M2.2 5L4.3 7.4L8 2.4" stroke="#dcecf8" stroke-width="1.7" fill="none"/></svg>
<span class="t bd" style="left:427.00px;top:129.74px;font-size:6.70px;line-height:8.04px;color:#d6d6d6;transform:scaleX(0.873);">High</span>
<span class="t bd" style="left:496.40px;top:129.62px;font-size:6.90px;line-height:8.28px;color:#111;transform:scaleX(0.930);">2.47&nbsp;V</span>
<span class="t bd" style="left:545.00px;top:129.62px;font-size:6.90px;line-height:8.28px;color:#111;transform:scaleX(0.930);">2.56&nbsp;V</span>
<svg style="left:418.50px;top:139.69px" width="6" height="6" viewBox="0 0 10 10"><rect x="0.3" y="0.3" width="9.4" height="9.4" rx="1.5" fill="#174a6c" stroke="#4d6a7c" stroke-width="0.8"/><path d="M1 1H9V3.6L1 5.6Z" fill="#3f93c4" opacity="0.7"/><path d="M2.2 5L4.3 7.4L8 2.4" stroke="#dcecf8" stroke-width="1.7" fill="none"/></svg>
<span class="t bd" style="left:427.00px;top:138.77px;font-size:6.70px;line-height:8.04px;color:#d6d6d6;transform:scaleX(0.858);">Low</span>
<span class="t bd" style="left:496.40px;top:138.65px;font-size:6.90px;line-height:8.28px;color:#111;transform:scaleX(0.930);">-2.47&nbsp;V</span>
<span class="t bd" style="left:545.00px;top:138.65px;font-size:6.90px;line-height:8.28px;color:#111;transform:scaleX(0.930);">-2.44&nbsp;V</span>
<svg style="left:418.50px;top:148.71px" width="6" height="6" viewBox="0 0 10 10"><rect x="0.3" y="0.3" width="9.4" height="9.4" rx="1.5" fill="#174a6c" stroke="#4d6a7c" stroke-width="0.8"/><path d="M1 1H9V3.6L1 5.6Z" fill="#3f93c4" opacity="0.7"/><path d="M2.2 5L4.3 7.4L8 2.4" stroke="#dcecf8" stroke-width="1.7" fill="none"/></svg>
<span class="t bd" style="left:427.00px;top:147.79px;font-size:6.70px;line-height:8.04px;color:#d6d6d6;transform:scaleX(0.840);">Amplitude</span>
<span class="t bd" style="left:496.40px;top:147.67px;font-size:6.90px;line-height:8.28px;color:#111;transform:scaleX(0.930);">4.94&nbsp;V</span>
<span class="t bd" style="left:545.00px;top:147.67px;font-size:6.90px;line-height:8.28px;color:#111;transform:scaleX(0.930);">5.00&nbsp;V</span>
<svg style="left:418.50px;top:157.74px" width="6" height="6" viewBox="0 0 10 10"><rect x="0.3" y="0.3" width="9.4" height="9.4" rx="1.5" fill="#174a6c" stroke="#4d6a7c" stroke-width="0.8"/><path d="M1 1H9V3.6L1 5.6Z" fill="#3f93c4" opacity="0.7"/><path d="M2.2 5L4.3 7.4L8 2.4" stroke="#dcecf8" stroke-width="1.7" fill="none"/></svg>
<span class="t bd" style="left:427.00px;top:156.82px;font-size:6.70px;line-height:8.04px;color:#d6d6d6;transform:scaleX(0.889);">AC&nbsp;RMS</span>
<span class="t bd" style="left:496.40px;top:156.70px;font-size:6.90px;line-height:8.28px;color:#111;transform:scaleX(0.930);">1.46&nbsp;V</span>
<span class="t bd" style="left:545.00px;top:156.70px;font-size:6.90px;line-height:8.28px;color:#111;transform:scaleX(0.930);">2.49&nbsp;V</span>
<svg style="left:418.50px;top:166.76px" width="6" height="6" viewBox="0 0 10 10"><rect x="0.3" y="0.3" width="9.4" height="9.4" rx="1.5" fill="#174a6c" stroke="#4d6a7c" stroke-width="0.8"/><path d="M1 1H9V3.6L1 5.6Z" fill="#3f93c4" opacity="0.7"/><path d="M2.2 5L4.3 7.4L8 2.4" stroke="#dcecf8" stroke-width="1.7" fill="none"/></svg>
<span class="t bd" style="left:427.00px;top:165.84px;font-size:6.70px;line-height:8.04px;color:#d6d6d6;transform:scaleX(0.902);">AC&nbsp;dBV</span>
<span class="t bd" style="left:496.40px;top:165.72px;font-size:6.90px;line-height:8.28px;color:#111;transform:scaleX(0.930);">3.30&nbsp;dBV</span>
<span class="t bd" style="left:545.00px;top:165.72px;font-size:6.90px;line-height:8.28px;color:#111;transform:scaleX(0.930);">7.92&nbsp;dBV</span>
<svg style="left:418.50px;top:175.79px" width="6" height="6" viewBox="0 0 10 10"><rect x="0.3" y="0.3" width="9.4" height="9.4" rx="1.5" fill="#174a6c" stroke="#4d6a7c" stroke-width="0.8"/><path d="M1 1H9V3.6L1 5.6Z" fill="#3f93c4" opacity="0.7"/><path d="M2.2 5L4.3 7.4L8 2.4" stroke="#dcecf8" stroke-width="1.7" fill="none"/></svg>
<span class="t bd" style="left:427.00px;top:174.87px;font-size:6.70px;line-height:8.04px;color:#d6d6d6;transform:scaleX(0.889);">AC&nbsp;dBm</span>
<span class="t bd" style="left:496.40px;top:174.75px;font-size:6.90px;line-height:8.28px;color:#111;transform:scaleX(0.930);">5.52&nbsp;dBm</span>
<span class="t bd" style="left:545.00px;top:174.75px;font-size:6.90px;line-height:8.28px;color:#111;transform:scaleX(0.930);">10.1&nbsp;dBm</span>
<svg style="left:418.50px;top:184.81px" width="6" height="6" viewBox="0 0 10 10"><rect x="0.3" y="0.3" width="9.4" height="9.4" rx="1.5" fill="#174a6c" stroke="#4d6a7c" stroke-width="0.8"/><path d="M1 1H9V3.6L1 5.6Z" fill="#3f93c4" opacity="0.7"/><path d="M2.2 5L4.3 7.4L8 2.4" stroke="#dcecf8" stroke-width="1.7" fill="none"/></svg>
<span class="t bd" style="left:427.00px;top:183.89px;font-size:6.70px;line-height:8.04px;color:#d6d6d6;transform:scaleX(0.900);">AC+DC&nbsp;RMS</span>
<span class="t bd" style="left:496.40px;top:183.77px;font-size:6.90px;line-height:8.28px;color:#111;transform:scaleX(0.930);">1.46&nbsp;V</span>
<span class="t bd" style="left:545.00px;top:183.77px;font-size:6.90px;line-height:8.28px;color:#111;transform:scaleX(0.930);">2.49&nbsp;V</span>
<svg style="left:418.50px;top:193.84px" width="6" height="6" viewBox="0 0 10 10"><rect x="0.3" y="0.3" width="9.4" height="9.4" rx="1.5" fill="#174a6c" stroke="#4d6a7c" stroke-width="0.8"/><path d="M1 1H9V3.6L1 5.6Z" fill="#3f93c4" opacity="0.7"/><path d="M2.2 5L4.3 7.4L8 2.4" stroke="#dcecf8" stroke-width="1.7" fill="none"/></svg>
<span class="t bd" style="left:427.00px;top:192.92px;font-size:6.70px;line-height:8.04px;color:#d6d6d6;transform:scaleX(0.908);">AC+DC&nbsp;dBV</span>
<span class="t bd" style="left:496.40px;top:192.80px;font-size:6.90px;line-height:8.28px;color:#111;transform:scaleX(0.930);">3.30&nbsp;dBV</span>
<span class="t bd" style="left:545.00px;top:192.80px;font-size:6.90px;line-height:8.28px;color:#111;transform:scaleX(0.930);">7.92&nbsp;dBV</span>
<svg style="left:418.50px;top:202.86px" width="6" height="6" viewBox="0 0 10 10"><rect x="0.3" y="0.3" width="9.4" height="9.4" rx="1.5" fill="#174a6c" stroke="#4d6a7c" stroke-width="0.8"/><path d="M1 1H9V3.6L1 5.6Z" fill="#3f93c4" opacity="0.7"/><path d="M2.2 5L4.3 7.4L8 2.4" stroke="#dcecf8" stroke-width="1.7" fill="none"/></svg>
<span class="t bd" style="left:427.00px;top:201.94px;font-size:6.70px;line-height:8.04px;color:#d6d6d6;transform:scaleX(0.900);">AC+DC&nbsp;dBm</span>
<span class="t bd" style="left:496.40px;top:201.82px;font-size:6.90px;line-height:8.28px;color:#111;transform:scaleX(0.930);">5.52&nbsp;dBm</span>
<span class="t bd" style="left:545.00px;top:201.82px;font-size:6.90px;line-height:8.28px;color:#111;transform:scaleX(0.930);">10.1&nbsp;dBm</span>
<span class="t bd" style="left:417.20px;top:211.03px;font-size:6.60px;line-height:7.92px;color:#f0f0f0;transform:scaleX(0.855);">Timing</span>
<svg style="left:418.50px;top:220.91px" width="6" height="6" viewBox="0 0 10 10"><rect x="0.3" y="0.3" width="9.4" height="9.4" rx="1.5" fill="#174a6c" stroke="#4d6a7c" stroke-width="0.8"/><path d="M1 1H9V3.6L1 5.6Z" fill="#3f93c4" opacity="0.7"/><path d="M2.2 5L4.3 7.4L8 2.4" stroke="#dcecf8" stroke-width="1.7" fill="none"/></svg>
<span class="t bd" style="left:427.00px;top:219.99px;font-size:6.70px;line-height:8.04px;color:#d6d6d6;transform:scaleX(0.881);">Duty&nbsp;Cycle</span>
<span class="t bd" style="left:496.40px;top:219.87px;font-size:6.90px;line-height:8.28px;color:#111;transform:scaleX(0.930);">49.1&nbsp;%</span>
<span class="t bd" style="left:545.00px;top:219.87px;font-size:6.90px;line-height:8.28px;color:#111;transform:scaleX(0.930);">47.5&nbsp;%</span>
<svg style="left:418.50px;top:229.94px" width="6" height="6" viewBox="0 0 10 10"><rect x="0.3" y="0.3" width="9.4" height="9.4" rx="1.5" fill="#174a6c" stroke="#4d6a7c" stroke-width="0.8"/><path d="M1 1H9V3.6L1 5.6Z" fill="#3f93c4" opacity="0.7"/><path d="M2.2 5L4.3 7.4L8 2.4" stroke="#dcecf8" stroke-width="1.7" fill="none"/></svg>
<span class="t bd" style="left:427.00px;top:229.02px;font-size:6.70px;line-height:8.04px;color:#d6d6d6;transform:scaleX(0.889);">Positive&nbsp;Width</span>
<span class="t bd" style="left:496.40px;top:228.90px;font-size:6.90px;line-height:8.28px;color:#111;transform:scaleX(0.930);">0.491&nbsp;ms</span>
<span class="t bd" style="left:545.00px;top:228.90px;font-size:6.90px;line-height:8.28px;color:#111;transform:scaleX(0.930);">0.475&nbsp;ms</span>
<svg style="left:418.50px;top:238.96px" width="6" height="6" viewBox="0 0 10 10"><rect x="0.3" y="0.3" width="9.4" height="9.4" rx="1.5" fill="#174a6c" stroke="#4d6a7c" stroke-width="0.8"/><path d="M1 1H9V3.6L1 5.6Z" fill="#3f93c4" opacity="0.7"/><path d="M2.2 5L4.3 7.4L8 2.4" stroke="#dcecf8" stroke-width="1.7" fill="none"/></svg>
<span class="t bd" style="left:427.00px;top:238.04px;font-size:6.70px;line-height:8.04px;color:#d6d6d6;transform:scaleX(0.921);">Negative&nbsp;Width</span>
<span class="t bd" style="left:496.40px;top:237.92px;font-size:6.90px;line-height:8.28px;color:#111;transform:scaleX(0.930);">0.509&nbsp;ms</span>
<span class="t bd" style="left:545.00px;top:237.92px;font-size:6.90px;line-height:8.28px;color:#111;transform:scaleX(0.930);">0.525&nbsp;ms</span>
<svg style="left:418.50px;top:247.99px" width="6" height="6" viewBox="0 0 10 10"><rect x="0.3" y="0.3" width="9.4" height="9.4" rx="1.5" fill="#174a6c" stroke="#4d6a7c" stroke-width="0.8"/><path d="M1 1H9V3.6L1 5.6Z" fill="#3f93c4" opacity="0.7"/><path d="M2.2 5L4.3 7.4L8 2.4" stroke="#dcecf8" stroke-width="1.7" fill="none"/></svg>
<span class="t bd" style="left:427.00px;top:247.07px;font-size:6.70px;line-height:8.04px;color:#d6d6d6;transform:scaleX(0.904);">Rise&nbsp;Time</span>
<span class="t bd" style="left:496.40px;top:246.95px;font-size:6.90px;line-height:8.28px;color:#111;transform:scaleX(0.930);">0.400&nbsp;ms</span>
<span class="t bd" style="left:545.00px;top:246.95px;font-size:6.90px;line-height:8.28px;color:#111;transform:scaleX(0.930);">0.000&nbsp;ms</span>
<svg style="left:418.50px;top:257.01px" width="6" height="6" viewBox="0 0 10 10"><rect x="0.3" y="0.3" width="9.4" height="9.4" rx="1.5" fill="#174a6c" stroke="#4d6a7c" stroke-width="0.8"/><path d="M1 1H9V3.6L1 5.6Z" fill="#3f93c4" opacity="0.7"/><path d="M2.2 5L4.3 7.4L8 2.4" stroke="#dcecf8" stroke-width="1.7" fill="none"/></svg>
<span class="t bd" style="left:427.00px;top:256.09px;font-size:6.70px;line-height:8.04px;color:#d6d6d6;transform:scaleX(0.899);">Fall&nbsp;Time</span>
<span class="t bd" style="left:496.40px;top:255.97px;font-size:6.90px;line-height:8.28px;color:#111;transform:scaleX(0.930);">0.360&nbsp;ms</span>
<span class="t bd" style="left:545.00px;top:255.97px;font-size:6.90px;line-height:8.28px;color:#111;transform:scaleX(0.930);">0.000&nbsp;ms</span>
<svg style="left:418.50px;top:266.04px" width="6" height="6" viewBox="0 0 10 10"><rect x="0.3" y="0.3" width="9.4" height="9.4" rx="1.5" fill="#174a6c" stroke="#4d6a7c" stroke-width="0.8"/><path d="M1 1H9V3.6L1 5.6Z" fill="#3f93c4" opacity="0.7"/><path d="M2.2 5L4.3 7.4L8 2.4" stroke="#dcecf8" stroke-width="1.7" fill="none"/></svg>
<span class="t bd" style="left:427.00px;top:265.12px;font-size:6.70px;line-height:8.04px;color:#d6d6d6;transform:scaleX(0.863);">Period</span>
<span class="t bd" style="left:496.40px;top:265.00px;font-size:6.90px;line-height:8.28px;color:#111;transform:scaleX(0.930);">1.00&nbsp;ms</span>
<span class="t bd" style="left:545.00px;top:265.00px;font-size:6.90px;line-height:8.28px;color:#111;transform:scaleX(0.930);">1.00&nbsp;ms</span>
<svg style="left:418.50px;top:275.06px" width="6" height="6" viewBox="0 0 10 10"><rect x="0.3" y="0.3" width="9.4" height="9.4" rx="1.5" fill="#174a6c" stroke="#4d6a7c" stroke-width="0.8"/><path d="M1 1H9V3.6L1 5.6Z" fill="#3f93c4" opacity="0.7"/><path d="M2.2 5L4.3 7.4L8 2.4" stroke="#dcecf8" stroke-width="1.7" fill="none"/></svg>
<span class="t bd" style="left:427.00px;top:274.14px;font-size:6.70px;line-height:8.04px;color:#d6d6d6;transform:scaleX(0.885);">Frequency</span>
<span class="t bd" style="left:496.40px;top:274.02px;font-size:6.90px;line-height:8.28px;color:#111;transform:scaleX(0.930);">1.000&nbsp;kHz</span>
<span class="t bd" style="left:545.00px;top:274.02px;font-size:6.90px;line-height:8.28px;color:#111;transform:scaleX(0.930);">1.00&nbsp;kHz</span>
<svg style="left:418.50px;top:284.09px" width="6" height="6" viewBox="0 0 10 10"><rect x="0.3" y="0.3" width="9.4" height="9.4" rx="1.5" fill="#174a6c" stroke="#4d6a7c" stroke-width="0.8"/><path d="M1 1H9V3.6L1 5.6Z" fill="#3f93c4" opacity="0.7"/><path d="M2.2 5L4.3 7.4L8 2.4" stroke="#dcecf8" stroke-width="1.7" fill="none"/></svg>
<span class="t bd" style="left:427.00px;top:283.17px;font-size:6.70px;line-height:8.04px;color:#d6d6d6;transform:scaleX(0.887);">Phase</span>
<span class="t bd" style="left:496.40px;top:283.05px;font-size:6.90px;line-height:8.28px;color:#111;transform:scaleX(0.930);">110.7&nbsp;deg</span>
<span class="t bd" style="left:545.00px;top:283.05px;font-size:6.90px;line-height:8.28px;color:#111;transform:scaleX(0.930);">-110.7&nbsp;deg</span>
<div class="b" style="left:417.50px;top:299.20px;width:34.70px;height:8.60px;"></div>
<span class="t bd" style="left:421.10px;top:299.75px;font-size:7.00px;line-height:8.40px;color:#e2e2e2;transform:scaleX(0.880);">Select&nbsp;All</span>
<div class="b" style="left:455.00px;top:299.20px;width:36.40px;height:8.60px;"></div>
<span class="t bd" style="left:456.20px;top:299.75px;font-size:7.00px;line-height:8.40px;color:#e2e2e2;transform:scaleX(0.854);">Unselect&nbsp;All</span>
<svg style="left:498.2px;top:299.6px" width="5.2" height="5.6" viewBox="0 0 10 11"><rect x="0.5" y="0.5" width="9" height="10" rx="1.5" fill="#1a6ea8"/><rect x="0.5" y="0.5" width="9" height="3" fill="#5ac0f0"/><rect x="1" y="5" width="8" height="2" fill="#9adcff"/></svg>
<span class="t bd" style="left:506.60px;top:298.52px;font-size:6.80px;line-height:8.16px;color:#e4e4e4;transform:scaleX(0.885);">Show&nbsp;on&nbsp;Screen</span>
<div class="b" style="left:565.80px;top:298.30px;width:23.00px;height:9.50px;"></div>
<span class="t bd" style="left:569.30px;top:299.30px;font-size:7.00px;line-height:8.40px;color:#e2e2e2;transform:scaleX(0.839);">Close</span>
<div class="b" style="left:565.80px;top:312.90px;width:23.00px;height:9.40px;"></div>
<span class="t bd" style="left:571.10px;top:313.85px;font-size:7.00px;line-height:8.40px;color:#e2e2e2;transform:scaleX(0.818);">Help</span>
</div></body></html>
